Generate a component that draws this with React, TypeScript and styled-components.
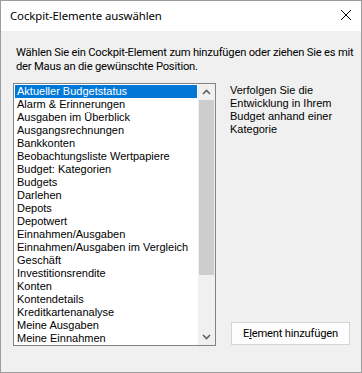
import React from "react";
import styled, { createGlobalStyle } from "styled-components";

const Global = createGlobalStyle`
  html, body { margin: 0; padding: 0; background: #ffffff; }
  * { box-sizing: border-box; }
`;

const uiFont = `"Noto Sans", "Open Sans", sans-serif`;
const textFont = `Roboto, "Noto Sans", sans-serif`;

const Window = styled.div`
  width: 362px;
  height: 373px;
  border: 1px solid #9d9d9d;
  display: flex;
  flex-direction: column;
  background: #f0f0f0;
  overflow: hidden;
`;

const TitleBar = styled.div`
  height: 30px;
  flex: none;
  background: #ffffff;
  display: flex;
  align-items: center;
  justify-content: space-between;
  padding: 0 9px 0 9px;
`;

const Title = styled.span`
  font-family: ${uiFont};
  font-size: 11.4px;
  letter-spacing: -0.1px;
  color: #000;
  margin-top: -2px;
`;

const CloseBox = styled.div`
  width: 12px;
  height: 12px;
  margin-top: -3px;
  display: flex;
`;

const Body = styled.div`
  flex: 1;
  padding: 15px 0 0 12px;
  display: flex;
  flex-direction: column;
`;

const Instruction = styled.p`
  margin: 0 0 9px 3px;
  font-family: ${textFont};
  font-size: 11.2px;
  letter-spacing: -0.2px;
  line-height: 14px;
  white-space: nowrap;
  color: #000;
`;

const Row = styled.div`
  display: flex;
  align-items: stretch;
`;

const ListBox = styled.div`
  width: 203px;
  height: 263px;
  border: 1px solid #828282;
  background: #ffffff;
  display: flex;
`;

const Items = styled.ul`
  flex: 1;
  margin: 0;
  padding: 1px 1px 0 1px;
  list-style: none;
  overflow: hidden;
`;

const Item = styled.li<{ $selected?: boolean }>`
  height: 13px;
  line-height: 13px;
  padding-left: 2px;
  font-family: "Liberation Sans", Arial, sans-serif;
  font-size: 11px;
  white-space: nowrap;
  color: ${(p) => (p.$selected ? "#ffffff" : "#000000")};
  background: ${(p) => (p.$selected ? "#0078d7" : "transparent")};
`;

const ScrollBar = styled.div`
  width: 17px;
  background: #f0f0f0;
  display: flex;
  flex-direction: column;
`;

const ArrowBox = styled.div`
  height: 16px;
  flex: none;
  display: flex;
  align-items: center;
  justify-content: center;
`;

const Track = styled.div`
  flex: 1;
  padding: 0 1px;
`;

const Thumb = styled.div`
  height: 175px;
  background: #cdcdcd;
`;

const Side = styled.div`
  width: 119px;
  margin-left: 14px;
  display: flex;
  flex-direction: column;
  justify-content: space-between;
`;

const Description = styled.p`
  margin: 1px 0 0 0;
  font-family: "Liberation Sans", Arial, sans-serif;
  font-size: 11px;
  line-height: 13px;
  color: #000;
`;

const Button = styled.button`
  width: 119px;
  height: 23px;
  margin: 0 0 1px 1px;
  border: 1px solid #d4d4d4;
  background: #fdfdfd;
  font-family: ${textFont};
  font-size: 11.2px;
  letter-spacing: -0.2px;
  color: #000;
  padding: 0;
  cursor: default;
`;

const Mnemonic = styled.span`
  text-decoration: underline;
`;

const items = [
  "Aktueller Budgetstatus",
  "Alarm & Erinnerungen",
  "Ausgaben im Überblick",
  "Ausgangsrechnungen",
  "Bankkonten",
  "Beobachtungsliste Wertpapiere",
  "Budget: Kategorien",
  "Budgets",
  "Darlehen",
  "Depots",
  "Depotwert",
  "Einnahmen/Ausgaben",
  "Einnahmen/Ausgaben im Vergleich",
  "Geschäft",
  "Investitionsrendite",
  "Konten",
  "Kontendetails",
  "Kreditkartenanalyse",
  "Meine Ausgaben",
  "Meine Einnahmen",
];

const Chevron = ({ up }: { up?: boolean }) => (
  <svg width="9" height="6" viewBox="0 0 9 6">
    <polyline
      points={up ? "1,5 4.5,1.5 8,5" : "1,1 4.5,4.5 8,1"}
      fill="none"
      stroke="#606060"
      strokeWidth="1.6"
    />
  </svg>
);

export default function App() {
  return (
    <>
      <Global />
      <Window>
        <TitleBar>
          <Title>Cockpit-Elemente auswählen</Title>
          <CloseBox>
            <svg width="12" height="12" viewBox="0 0 12 12">
              <path d="M1 1 L11 11 M11 1 L1 11" stroke="#000" strokeWidth="1" fill="none" />
            </svg>
          </CloseBox>
        </TitleBar>
        <Body>
          <Instruction>
            Wählen Sie ein Cockpit-Element zum hinzufügen oder ziehen Sie es mit
            <br />
            der Maus an die gewünschte Position.
          </Instruction>
          <Row>
            <ListBox>
              <Items>
                {items.map((t, i) => (
                  <Item key={t} $selected={i === 0}>
                    {t}
                  </Item>
                ))}
              </Items>
              <ScrollBar>
                <ArrowBox>
                  <Chevron up />
                </ArrowBox>
                <Track>
                  <Thumb />
                </Track>
                <ArrowBox>
                  <Chevron />
                </ArrowBox>
              </ScrollBar>
            </ListBox>
            <Side>
              <Description>
                Verfolgen Sie die Entwicklung in Ihrem Budget anhand einer Kategorie
              </Description>
              <Button>
                E<Mnemonic>l</Mnemonic>ement hinzufügen
              </Button>
            </Side>
          </Row>
        </Body>
      </Window>
    </>
  );
}
